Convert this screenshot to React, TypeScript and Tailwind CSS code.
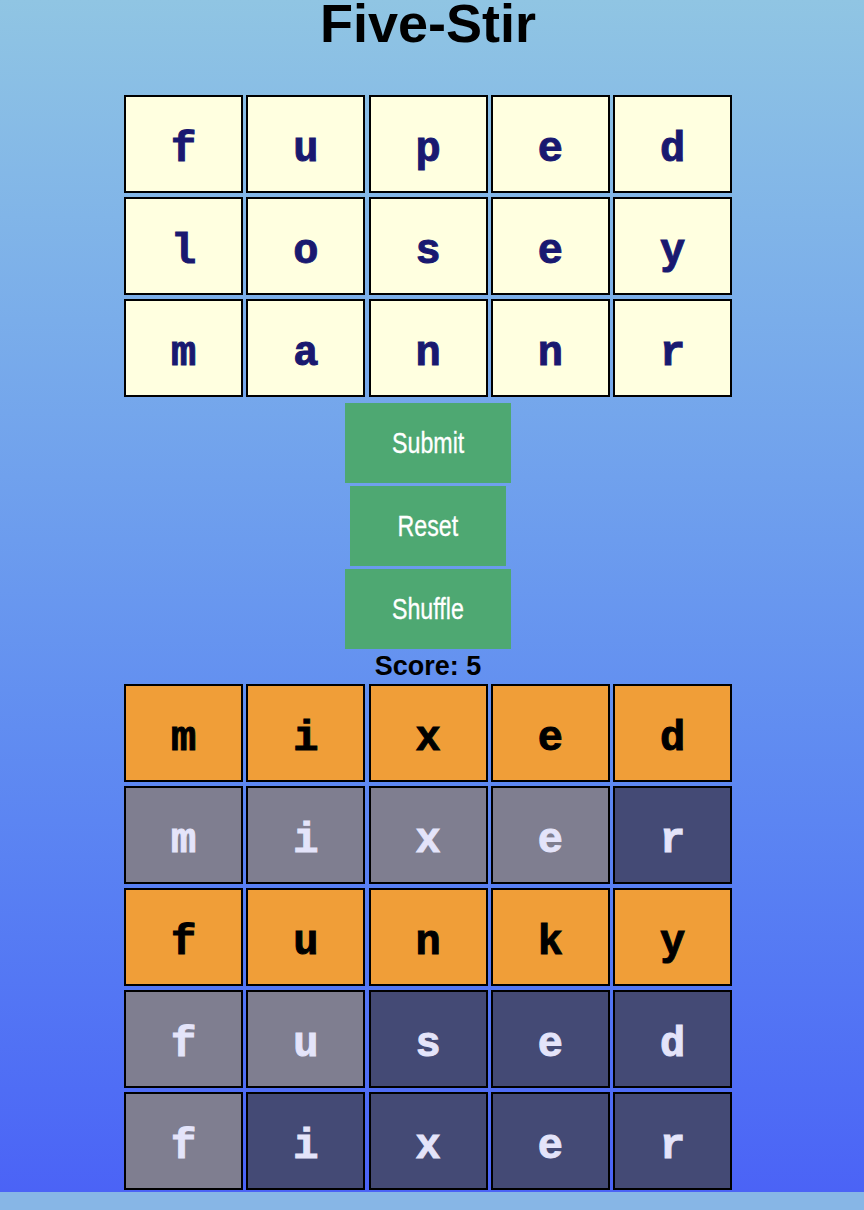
import React from "react";

type Kind = "y" | "o" | "g" | "d";

const top: string[][] = [
  ["f", "u", "p", "e", "d"],
  ["l", "o", "s", "e", "y"],
  ["m", "a", "n", "n", "r"],
];

const bottom: [string, Kind][][] = [
  [["m", "o"], ["i", "o"], ["x", "o"], ["e", "o"], ["d", "o"]],
  [["m", "g"], ["i", "g"], ["x", "g"], ["e", "g"], ["r", "d"]],
  [["f", "o"], ["u", "o"], ["n", "o"], ["k", "o"], ["y", "o"]],
  [["f", "g"], ["u", "g"], ["s", "d"], ["e", "d"], ["d", "d"]],
  [["f", "g"], ["i", "d"], ["x", "d"], ["e", "d"], ["r", "d"]],
];

const kindCls: Record<Kind, string> = {
  y: "bg-[#ffffe0] text-[#191970]",
  o: "bg-[#f09e38] text-black",
  g: "bg-[#7f7e90] text-[#e4e4fa]",
  d: "bg-[#444a75] text-[#e4e4fa]",
};

function Tile({ ch, kind }: { ch: string; kind: Kind }) {
  return (
    <div
      className={`flex h-[98px] w-[119px] items-center justify-center border-2 border-black pt-3 text-[42px] font-bold [-webkit-text-stroke:1px_currentColor] ${kindCls[kind]}`}
      style={{ fontFamily: '"Liberation Mono", "Courier New", monospace' }}
    >
      {ch}
    </div>
  );
}

function Btn({ label, w }: { label: string; w: string }) {
  return (
    <button className={`flex h-[80px] ${w} items-center justify-center bg-[#4ea872] text-white`}>
      <span className="inline-block scale-x-[0.8] text-[29px] leading-none [-webkit-text-stroke:0.3px_currentColor]">{label}</span>
    </button>
  );
}

export default function App() {
  return (
    <div className="w-[864px]" style={{ fontFamily: '"Liberation Sans", Arial, sans-serif' }}>
      <div className="min-h-[1192px] w-[864px] bg-gradient-to-b from-[#90c5e3] to-[#4b63f6]">
        <div className="flex w-[856px] flex-col items-center pb-[2px]">
          <h1 className="text-[54px] font-bold leading-[47px] text-black">Five-Stir</h1>
          <div className="mt-[48px] grid grid-cols-[repeat(5,119px)] gap-x-[3.25px] gap-y-[4px]">
            {top.flat().map((c, i) => (
              <Tile key={i} ch={c} kind="y" />
            ))}
          </div>
          <div className="mt-[6px] flex flex-col items-center gap-[3px]">
            <Btn label="Submit" w="w-[166px]" />
            <Btn label="Reset" w="w-[156px]" />
            <Btn label="Shuffle" w="w-[166px]" />
          </div>
          <div className="flex h-[35px] items-center text-[27px] font-bold leading-none text-black">Score: 5</div>
          <div className="grid grid-cols-[repeat(5,119px)] gap-x-[3.25px] gap-y-[4px]">
            {bottom.flat().map(([c, k], i) => (
              <Tile key={i} ch={c} kind={k} />
            ))}
          </div>
        </div>
      </div>
      <div className="h-[18px] w-[864px] bg-[#87b6e6]" />
    </div>
  );
}
